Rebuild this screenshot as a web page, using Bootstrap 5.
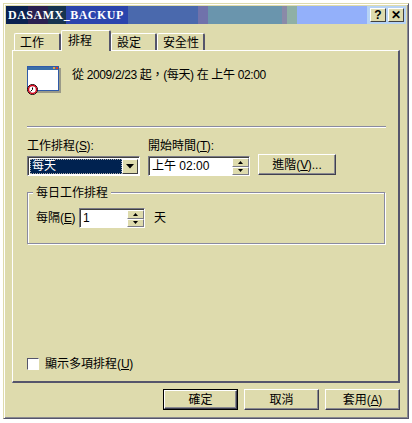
<!DOCTYPE html>
<html lang="zh-Hant">
<head>
<meta charset="UTF-8">
<title>DASAMX_BACKUP</title>
<link href="https://cdn.jsdelivr.net/npm/bootstrap@5.3.0/dist/css/bootstrap.min.css" rel="stylesheet">
<style>
html, body { margin: 0; background: #fff; }
body { width: 412px; height: 423px; overflow: hidden; font: 12px/14px "Liberation Sans", "Noto Sans CJK TC", sans-serif; color: #000; }
u { letter-spacing: -.5px; }
.win { margin: 3px 0 0 3px; width: 406px; height: 416px; background: #dedbad; border: 1px solid; border-color: #dedbad #55556b #55556b #dedbad; box-shadow: inset 1px 1px 0 #fff, inset -1px -1px 0 #8a8a90; padding: 2px; display: flex; flex-direction: column; }
.tbar { height: 18px; flex: none; display: flex; align-items: center; justify-content: space-between; padding-right: 2px; background: linear-gradient(90deg, #0a2150 0 22px, #2a2050 22px 42px, #16344f 42px 60px, #2b45ad 60px 122px, #4a69ad 122px 192px, #7072ab 192px 202px, #6a95ad 202px 276px, #8a8aa8 276px 281px, #8fb0a5 281px 291px, #93b0fa 291px 361px, #b6d3f5 361px); }
.ttl { font: bold 12px "Liberation Serif", serif; color: #fff; padding-left: 2px; letter-spacing: .5px; }
.tbtns { display: flex; gap: 2px; }
.tbtn { width: 16px; height: 14px; background: #dedbad; border: 1px solid; border-color: #fff #404040 #404040 #fff; font: bold 12px/12px "Liberation Sans", sans-serif; text-align: center; }
.tabs-row { display: flex; flex: none; height: 26px; padding-left: 8px; align-items: flex-end; position: relative; z-index: 1; }
.tb { height: 17px; flex: none; padding: 2px 0 0 5px; border: 1px solid #fff; border-bottom: 0; border-right: 2px solid #55556b; border-radius: 2px 2px 0 0; background: #dedbad; }
.tb.on { height: 21px; margin-bottom: -1px; padding: 3px 0 0 6px; }
.pane { margin: 0 6px; height: 333px; flex: none; display: flex; flex-direction: column; border: 1px solid #fff; border-right: 2px solid #55556b; border-bottom: 2px solid #55556b; padding: 0 12px 10px 14px; }
.sum { display: flex; height: 75px; padding-top: 15px; gap: 11px; }
.sumtxt { padding-top: 2px; letter-spacing: -.35px; }
.rule { border-top: 1px solid #8a8aa0; border-bottom: 1px solid #fff; height: 2px; }
.fields { display: flex; margin-top: 10px; }
.lbl { height: 18px; padding-top: 1px; }
.combo { width: 113px; height: 20px; background: #fff; border: 1px solid #fff; border-top-color: #7a7a85; border-left-color: #7a7a85; display: flex; padding: 1px; box-shadow: inset 1px 1px 0 #404040; }
.sel { flex: 1; background: #002250; color: #fff; line-height: 15px; padding-left: 2px; outline: 1px dotted #aaa; outline-offset: -1px; margin: 1px 0 0 1px; }
.drop { width: 16px; background: #dedbad; border: 1px solid; border-color: #fff #404040 #404040 #fff; display: flex; align-items: center; justify-content: center; margin-top: 1px; }
.spin { height: 20px; background: #fff; border: 1px solid #fff; border-top-color: #7a7a85; border-left-color: #7a7a85; box-shadow: inset 1px 1px 0 #404040; display: flex; justify-content: space-between; line-height: 18px; padding-left: 3px; }
.spbtns { width: 17px; display: flex; flex-direction: column; padding-top: 1px; }
.spbtns span { flex: 1; background: #dedbad; border: 1px solid; border-color: #fff #7a7a85 #7a7a85 #fff; display: flex; align-items: center; justify-content: center; }
.wbtn { background: #dedbad; border: 1px solid; border-color: #fff #404050 #404050 #fff; box-shadow: inset -1px -1px 0 #8a8a90; display: flex; align-items: center; justify-content: center; }
.grp { margin: 16px 1px 0 0; height: 52px; position: relative; border: 1px solid #8a8aa0; box-shadow: 1px 1px 0 #fff, inset 1px 1px 0 #fff; padding: 15px 8px 0; display: flex; align-items: flex-start; }
.grplg { position: absolute; top: -7px; left: 5px; background: #dedbad; padding: 0 3px; }
.chk { margin-top: auto; display: flex; align-items: flex-start; gap: 6px; }
.chkbx { width: 12px; height: 12px; margin-top: 3px; background: #fff; border: 1px solid; border-color: #55556b #fff #fff #55556b; }
.chktxt { padding-top: 2px; }
.foot { display: flex; justify-content: flex-end; gap: 6px; margin: 6px 6px 0 0; }
.foot .wbtn { width: 75px; height: 21px; }
.foot .wbtn.def { outline: 1px solid #000; width: 73px; height: 19px; margin: 1px; }
</style>
</head>
<body>
<div class="win">
  <div class="tbar">
    <span class="ttl">DASAMX_BACKUP</span>
    <div class="tbtns"><span class="tbtn">?</span><span class="tbtn">✕</span></div>
  </div>
  <div class="tabs-row">
    <div class="tb" style="width:47px">工作</div>
    <div class="tb on" style="width:50px">排程</div>
    <div class="tb" style="width:46px">設定</div>
    <div class="tb" style="width:48px">安全性</div>
  </div>
  <div class="pane">
    <div class="sum">
      <svg width="34" height="30" viewBox="0 0 34 30">
        <rect x="3" y="2" width="31" height="25" fill="#9a9a88"/>
        <rect x=".5" y=".5" width="31" height="24" fill="#fff" stroke="#2f5aa8"/>
        <rect x="1" y="1" width="30" height="3" fill="#3a6ea8"/>
        <rect x="26" y="1" width="2" height="2" fill="#e0a040"/>
        <rect x="29" y="1" width="2" height="2" fill="#d04030"/>
        <circle cx="5.5" cy="23.5" r="5" fill="#fff" stroke="#000"/>
        <circle cx="5.5" cy="23.5" r="4" fill="#fff" stroke="#d00018" stroke-width="1.5"/>
        <path d="M5.5 21.5v2L3.5 25.5" fill="none" stroke="#000"/>
      </svg>
      <div class="sumtxt">從 2009/2/23 起，(每天) 在 上午 02:00</div>
    </div>
    <div class="rule"></div>
    <div class="fields">
      <div>
        <div class="lbl">工作排程(<u>S</u>):</div>
        <div class="combo"><div class="sel">每天</div><div class="drop"><svg width="8" height="5"><path d="M0 0H8L4 4.5Z"/></svg></div></div>
      </div>
      <div class="ms-2">
        <div class="lbl">開始時間(<u>T</u>):</div>
        <div class="spin" style="width:102px">上午 02:00<div class="spbtns"><span><svg width="5" height="3"><path d="M2.5 0L5 3H0Z"/></svg></span><span><svg width="5" height="3"><path d="M0 0H5L2.5 3Z"/></svg></span></div></div>
      </div>
      <div class="wbtn" style="width:78px;height:21px;margin:16px 0 0 8px">進階(<u>V</u>)...</div>
    </div>
    <div class="grp">
      <span class="grplg">每日工作排程</span>
      <span style="width:43px;line-height:20px">每隔(<u>E</u>)</span>
      <div class="spin" style="width:66px">1<div class="spbtns"><span><svg width="5" height="3"><path d="M2.5 0L5 3H0Z"/></svg></span><span><svg width="5" height="3"><path d="M0 0H5L2.5 3Z"/></svg></span></div></div>
      <span style="margin-left:9px;line-height:20px">天</span>
    </div>
    <div class="chk"><span class="chkbx"></span><span class="chktxt">顯示多項排程(<u>U</u>)</span></div>
  </div>
  <div class="foot">
    <div class="wbtn def">確定</div>
    <div class="wbtn">取消</div>
    <div class="wbtn">套用(<u>A</u>)</div>
  </div>
</div>
</body>
</html>
